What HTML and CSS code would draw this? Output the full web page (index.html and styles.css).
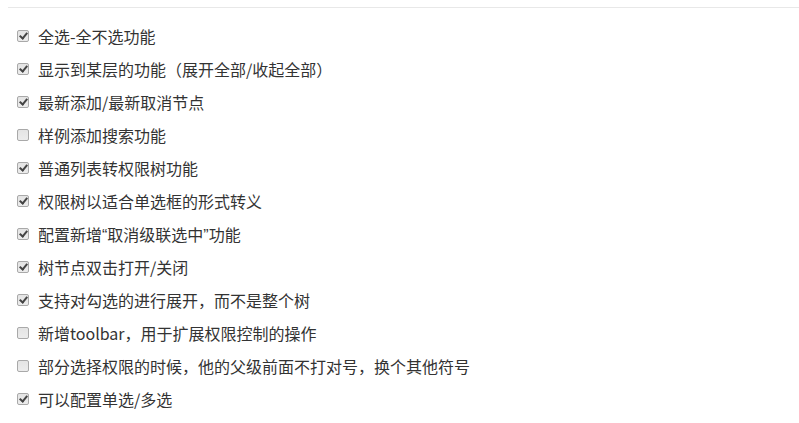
FILE: index.html
```html
<!DOCTYPE html>
<html>
<head>
<meta charset="utf-8">
<link rel="stylesheet" href="styles.css">
</head>
<body>
<div class="rule"></div>
<ul class="list">
  <li><span class="box checked"></span><span>全选-全不选功能</span></li>
  <li><span class="box checked"></span><span>显示到某层的功能（展开全部/收起全部）</span></li>
  <li><span class="box checked"></span><span>最新添加/最新取消节点</span></li>
  <li><span class="box"></span><span>样例添加搜索功能</span></li>
  <li><span class="box checked"></span><span>普通列表转权限树功能</span></li>
  <li><span class="box checked"></span><span>权限树以适合单选框的形式转义</span></li>
  <li><span class="box checked"></span><span>配置新增<span class="q">“</span>取消级联选中<span class="q">”</span>功能</span></li>
  <li><span class="box checked"></span><span>树节点双击打开/关闭</span></li>
  <li><span class="box checked"></span><span>支持对勾选的进行展开，而不是整个树</span></li>
  <li><span class="box"></span><span>新增toolbar，用于扩展权限控制的操作</span></li>
  <li><span class="box"></span><span>部分选择权限的时候，他的父级前面不打对号，换个其他符号</span></li>
  <li><span class="box checked"></span><span>可以配置单选/多选</span></li>
</ul>
</body>
</html>
```
FILE: styles.css
```css
html, body {
  margin: 0;
  padding: 0;
  background: #fff;
}
body {
  font-family: "Microsoft YaHei", "Noto Sans CJK SC", "Liberation Sans", sans-serif;
  font-size: 16px;
  color: #333;
}
.rule {
  height: 7px;
  margin-left: 8px;
  border-bottom: 1px solid #e8e8e8;
}
.list {
  list-style: none;
  margin: 11px 0 0 0;
  padding: 0 0 0 17px;
}
.list li {
  display: flex;
  align-items: center;
  height: 33px;
}
.q {
  font-family: "Liberation Sans", sans-serif;
}
.box {
  position: relative;
  box-sizing: border-box;
  width: 12px;
  height: 12px;
  margin-right: 9px;
  border: 1px solid #a9a9a9;
  border-radius: 2px;
  background: linear-gradient(#e4e4e4, #ececec);
  flex: none;
}
.box.checked::after {
  content: "";
  position: absolute;
  left: 3px;
  top: 0px;
  width: 3px;
  height: 6px;
  border-right: 2px solid #444;
  border-bottom: 2px solid #444;
  transform: rotate(40deg);
}
```
